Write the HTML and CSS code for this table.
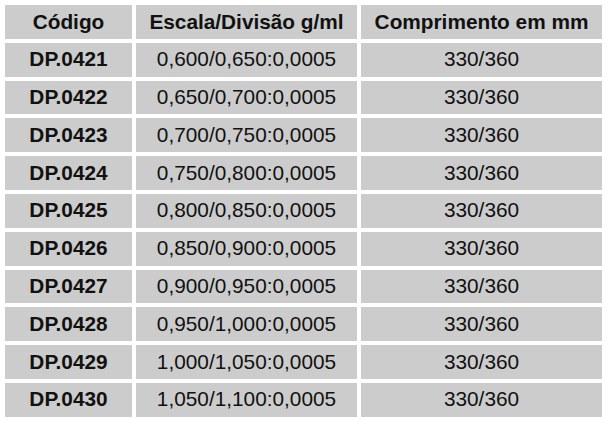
FILE: index.html
```html
<!DOCTYPE html>
<html lang="pt">
<head>
<meta charset="utf-8">
<title>Tabela</title>
<link rel="stylesheet" href="styles.css">
</head>
<body>
<table class="spec">
  <thead>
    <tr><th class="c1">Código</th><th class="c2">Escala/Divisão g/ml</th><th class="c3">Comprimento em mm</th></tr>
  </thead>
  <tbody>
    <tr><td class="code">DP.0421</td><td>0,600/0,650:0,0005</td><td>330/360</td></tr>
    <tr><td class="code">DP.0422</td><td>0,650/0,700:0,0005</td><td>330/360</td></tr>
    <tr><td class="code">DP.0423</td><td>0,700/0,750:0,0005</td><td>330/360</td></tr>
    <tr><td class="code">DP.0424</td><td>0,750/0,800:0,0005</td><td>330/360</td></tr>
    <tr><td class="code">DP.0425</td><td>0,800/0,850:0,0005</td><td>330/360</td></tr>
    <tr><td class="code">DP.0426</td><td>0,850/0,900:0,0005</td><td>330/360</td></tr>
    <tr><td class="code">DP.0427</td><td>0,900/0,950:0,0005</td><td>330/360</td></tr>
    <tr><td class="code">DP.0428</td><td>0,950/1,000:0,0005</td><td>330/360</td></tr>
    <tr><td class="code">DP.0429</td><td>1,000/1,050:0,0005</td><td>330/360</td></tr>
    <tr><td class="code">DP.0430</td><td>1,050/1,100:0,0005</td><td>330/360</td></tr>
  </tbody>
</table>
</body>
</html>
```
FILE: styles.css
```css
html, body {
  margin: 0;
  padding: 0;
  background: #ffffff;
}
body {
  padding: 1px;
  font-family: "Liberation Sans", Arial, sans-serif;
  font-size: 20.8px;
  color: #111111;
}
.spec {
  border-collapse: separate;
  border-spacing: 4px;
  table-layout: fixed;
}
.spec th,
.spec td {
  background: #cccccc;
  padding: 0;
  height: 33.8px;
  text-align: center;
  vertical-align: middle;
  white-space: nowrap;
  line-height: 1;
}
.spec th {
  font-weight: bold;
}
.c1 { width: 127px; }
.c2 { width: 221px; }
.c3 { width: 241px; }
.code {
  font-weight: bold;
}
```
